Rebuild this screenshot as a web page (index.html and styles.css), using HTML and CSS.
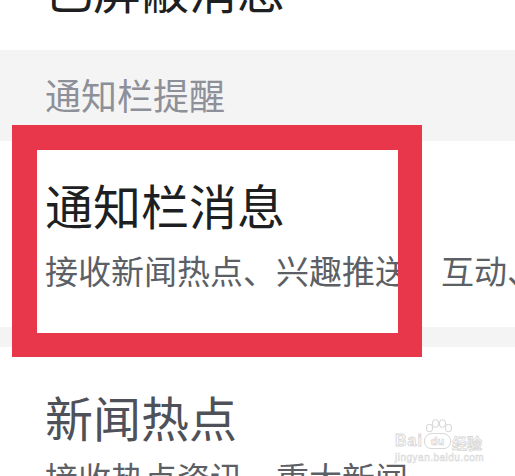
FILE: index.html
```html
<!DOCTYPE html>
<html lang="zh-CN">
<head>
  <meta charset="UTF-8">
  <meta name="viewport" content="width=device-width, initial-scale=1.0">
  <title>通知栏提醒</title>
  <link rel="stylesheet" href="styles.css">
</head>
<body>
<main class="screen">
  <div class="row row-top">
    <div class="item-title">已屏蔽消息</div>
  </div>

  <div class="section-head">通知栏提醒</div>

  <div class="row item-notify">
    <div class="item-title">通知栏消息</div>
    <div class="item-sub">接收新闻热点、兴趣推送、互动、系统消息</div>
  </div>

  <div class="row item-news">
    <div class="item-title muted">新闻热点</div>
    <div class="item-sub">接收热点资讯、重大新闻</div>
  </div>

  <!-- annotation box drawn over the list -->
  <div class="mark"></div>

  <div class="watermark">
    <svg class="wm-paw" width="28" height="14" viewBox="0 0 28 14">
      <g fill="#fff" stroke="#d9d9d9" stroke-width="1.1">
        <ellipse cx="4.5" cy="9" rx="3" ry="3.8"/>
        <ellipse cx="10.5" cy="4.5" rx="3" ry="3.8"/>
        <ellipse cx="17.5" cy="4.5" rx="3" ry="3.8"/>
        <ellipse cx="23.5" cy="9" rx="3" ry="3.8"/>
      </g>
    </svg>
    <div class="wm-top">
      <span class="wm-bai">Bai</span>
      <span class="wm-du">du</span>
      <span class="wm-cn">经验</span>
    </div>
    <div class="wm-url">jingyan.baidu.com</div>
  </div>
</main>
</body>
</html>
```

FILE: styles.css
```css
:root {
  --bg-gray: #f4f4f4;
  --text-dark: #1e1f22;
  --text-sub: #5c5f65;
  --text-head: #8d9098;
  --mark-red: #e8364a;
  --wm-line: #d8d8d8;
}
* { box-sizing: border-box; }
html, body { margin: 0; padding: 0; background: #fff; }
body { font-family: "Noto Sans CJK SC", "Noto Sans", sans-serif; overflow: hidden; }
.screen { position: relative; width: 515px; height: 476px; overflow: hidden; }

.row { background: #fff; padding: 0 0 0 45px; }
.item-title { font-size: 48px; line-height: 1; color: var(--text-dark); white-space: nowrap; }
.item-title.muted { color: #4e5158; }
.item-sub { font-size: 33px; line-height: 1; color: var(--text-sub); white-space: nowrap; }

.row-top { padding-bottom: 38px; }
.row-top .item-title { margin-top: -36px; }

.section-head { background: var(--bg-gray); color: var(--text-head); font-size: 36px; line-height: 1; padding: 26px 0 29px 45px; }

.item-notify { padding-top: 39px; padding-bottom: 40px; }
.item-notify .item-sub { margin-top: 26px; }

.item-news { margin-top: 20px; padding-top: 45px; box-shadow: 0 -20px 0 var(--bg-gray); }
.item-news .item-sub { margin-top: 21px; }

.mark {
  position: absolute; left: 12px; top: 125px; width: 410px; height: 232px;
  border: solid var(--mark-red); border-width: 25px 24px 24px 25px;
  background: linear-gradient(transparent calc(100% - 6px), #fff 0);
}

.watermark { position: absolute; left: 395px; top: 419px; width: 92px; color: #fff; font-family: "Liberation Sans", sans-serif; }
.wm-paw { position: absolute; left: 30px; top: 0; }
.wm-top { display: flex; align-items: flex-end; height: 30px; }
.wm-bai { font-size: 16px; font-weight: bold; line-height: 1; letter-spacing: 1px; -webkit-text-stroke: 0.9px var(--wm-line); }
.wm-du { width: 27px; height: 16px; margin: 0 1px 0 1px; font-size: 11px; font-weight: bold; line-height: 14px; text-align: center; background: #fff; border: 1px solid var(--wm-line); border-radius: 8px 8px 7px 7px; -webkit-text-stroke: 0.6px #d0d0d0; }
.wm-cn { font-family: "Noto Sans CJK SC", sans-serif; font-size: 15px; font-weight: bold; line-height: 1; margin-bottom: -1px; -webkit-text-stroke: 0.8px var(--wm-line); }
.wm-url { font-size: 10px; line-height: 1; margin-top: 4px; letter-spacing: 0.5px; -webkit-text-stroke: 0.6px #dadada; }
```
